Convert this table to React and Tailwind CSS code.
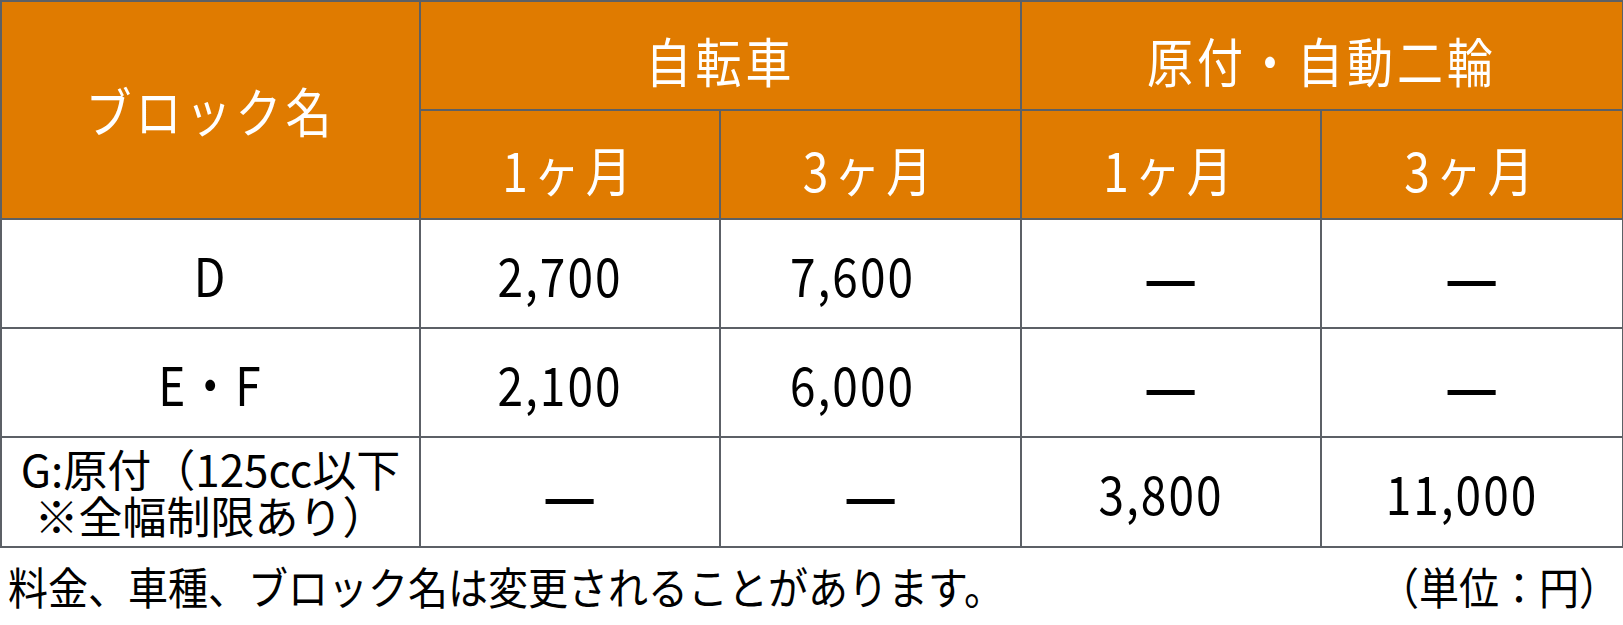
const font = { fontFamily: '"Noto Sans CJK JP", "Noto Sans", sans-serif' };

const head = 'border-2 border-[#5c6066] bg-[#e07b00] text-white text-center align-middle';
const cell = 'border-2 border-[#5c6066] bg-white text-black text-center align-middle';

function T({ children, className = 'scale-y-[1.15]' }) {
  return <span className={`inline-block ${className}`}>{children}</span>;
}

// em dash drawn a bit wider and heavier, like the source sheet
function Dash() {
  return <T className="scale-x-[1.3] scale-y-[1.4] font-medium">—</T>;
}

const rows = [
  { name: 'D', v: ['2,700', '7,600'] },
  { name: 'E・F', v: ['2,100', '6,000'] },
];

// the figures sit a little left of centre in the source
const numPad = ['pr-[20px]', 'pr-[36px]'];

export default function App() {
  return (
    <div className="w-[1623px] h-[625px] bg-white overflow-hidden" style={font}>
      <table className="w-[1622px] border-collapse table-fixed text-[46px] leading-none">
        <colgroup>
          <col className="w-[419px]" />
          <col className="w-[300px]" />
          <col className="w-[301px]" />
          <col className="w-[300px]" />
          <col className="w-[302px]" />
        </colgroup>
        <thead>
          <tr className="h-[109px]">
            <th rowSpan={2} className={`${head} font-normal tracking-[4px]`}>
              <T>ブロック名</T>
            </th>
            <th colSpan={2} className={`${head} font-normal tracking-[4px] pt-2`}>
              <T>自転車</T>
            </th>
            <th colSpan={2} className={`${head} font-normal tracking-[4px] pt-2`}>
              <T>原付・自動二輪</T>
            </th>
          </tr>
          <tr className="h-[109px]">
            {['1ヶ月', '3ヶ月', '1ヶ月', '3ヶ月'].map((t, i) => (
              <th key={i} className={`${head} font-normal tracking-[6px] pt-2`}>
                <T>{t}</T>
              </th>
            ))}
          </tr>
        </thead>
        <tbody>
          {rows.map((r) => (
            <tr key={r.name} className="h-[109px]">
              <td className={`${cell} tracking-[2px]`}>
                <T>{r.name}</T>
              </td>
              {r.v.map((v, i) => (
                <td key={i} className={`${cell} tracking-[2px] ${numPad[i]}`}>
                  <T>{v}</T>
                </td>
              ))}
              <td className={cell}><Dash /></td>
              <td className={cell}><Dash /></td>
            </tr>
          ))}
          <tr className="h-[110px]">
            <td className={`${cell} text-[44px]`}>
              <div className="leading-[47px]">G:原付（125cc以下</div>
              <div className="leading-[47px]">※全幅制限あり）</div>
            </td>
            <td className={cell}><Dash /></td>
            <td className={cell}><Dash /></td>
            <td className={`${cell} tracking-[2px] pr-[20px]`}><T>3,800</T></td>
            <td className={`${cell} tracking-[2px] pr-[20px]`}><T>11,000</T></td>
          </tr>
        </tbody>
      </table>
      <div className="flex items-center justify-between pl-2 pr-[4px] h-[76px] text-[40px] text-black">
        <span className="inline-block scale-y-[1.1]">料金、車種、ブロック名は変更されることがあります。</span>
        <span className="inline-block scale-y-[1.1]">（単位：円）</span>
      </div>
    </div>
  );
}
